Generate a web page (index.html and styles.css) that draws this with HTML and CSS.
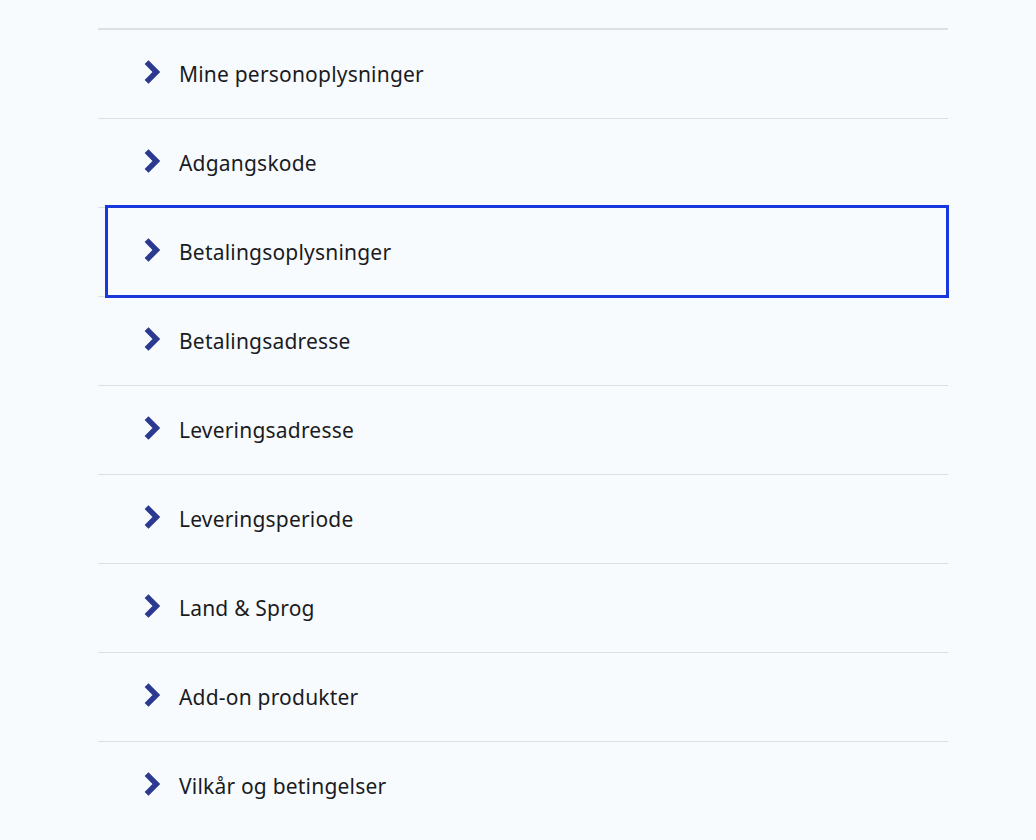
FILE: index.html
```html
<!DOCTYPE html>
<html lang="da">
<head>
<meta charset="utf-8">
<link rel="stylesheet" href="styles.css">
</head>
<body>
<ul class="menu">
  <li class="item"><a class="link"><svg class="chev" viewBox="0 0 16 22"><polyline points="3,2 12,11 3,20"/></svg><span>Mine personoplysninger</span></a></li>
  <li class="item"><a class="link"><svg class="chev" viewBox="0 0 16 22"><polyline points="3,2 12,11 3,20"/></svg><span>Adgangskode</span></a></li>
  <li class="item"><a class="link focused"><svg class="chev" viewBox="0 0 16 22"><polyline points="3,2 12,11 3,20"/></svg><span>Betalingsoplysninger</span></a></li>
  <li class="item"><a class="link"><svg class="chev" viewBox="0 0 16 22"><polyline points="3,2 12,11 3,20"/></svg><span>Betalingsadresse</span></a></li>
  <li class="item"><a class="link"><svg class="chev" viewBox="0 0 16 22"><polyline points="3,2 12,11 3,20"/></svg><span>Leveringsadresse</span></a></li>
  <li class="item"><a class="link"><svg class="chev" viewBox="0 0 16 22"><polyline points="3,2 12,11 3,20"/></svg><span>Leveringsperiode</span></a></li>
  <li class="item"><a class="link"><svg class="chev" viewBox="0 0 16 22"><polyline points="3,2 12,11 3,20"/></svg><span>Land &amp; Sprog</span></a></li>
  <li class="item"><a class="link"><svg class="chev" viewBox="0 0 16 22"><polyline points="3,2 12,11 3,20"/></svg><span>Add-on produkter</span></a></li>
  <li class="item"><a class="link"><svg class="chev" viewBox="0 0 16 22"><polyline points="3,2 12,11 3,20"/></svg><span>Vilkår og betingelser</span></a></li>
</ul>
</body>
</html>
```
FILE: styles.css
```css
html, body {
  margin: 0;
  padding: 0;
  background: #f7fbfe;
}
body {
  font-family: "Noto Sans", "Open Sans", sans-serif;
  color: #1b1b1f;
  height: 840px;
  overflow: hidden;
}
.menu {
  list-style: none;
  margin: 28px 0 0 98px;
  padding: 0;
  width: 850px;
  border-top: 2px solid #dcdfe3;
}
.item {
  border-bottom: 1px solid #dcdfe3;
}
.item:last-child {
  border-bottom: none;
}
.link {
  position: relative;
  display: flex;
  align-items: center;
  height: 88px;
  padding-left: 45px;
  font-size: 21px;
  letter-spacing: 0.2px;
}
.link.focused::after {
  content: "";
  position: absolute;
  left: 7px;
  right: -1px;
  top: -3px;
  bottom: -2px;
  border: 3px solid #1a37dd;
}
.chev {
  width: 18px;
  height: 24px;
  margin-right: 18px;
  margin-top: -4px;
  fill: none;
  stroke: #2b3990;
  stroke-width: 5;
  stroke-linejoin: miter;
  stroke-linecap: butt;
}
```
